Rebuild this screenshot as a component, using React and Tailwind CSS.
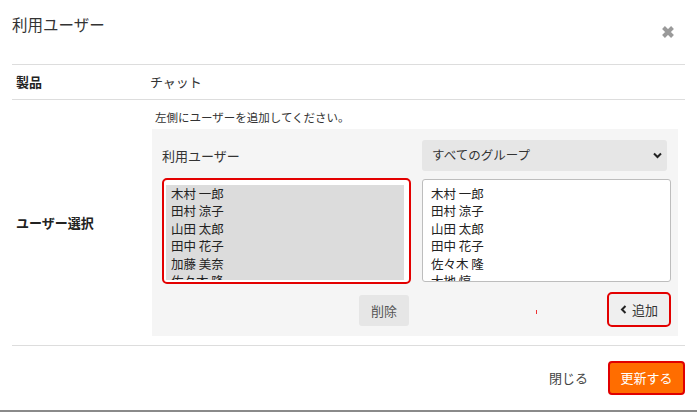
import { useState } from 'react';

const users = ['木村 一郎', '田村 涼子', '山田 太郎', '田中 花子', '加藤 美奈', '佐々木 隆'];
const members = ['木村 一郎', '田村 涼子', '山田 太郎', '田中 花子', '佐々木 隆', '大地 惇'];

export default function App() {
  const [group, setGroup] = useState('all');

  return (
    <div
      className="h-[412px] w-[697px] overflow-hidden bg-white text-[#333] border-b-2 border-[#8a8a8a]"
      style={{ fontFamily: '"Noto Sans CJK JP", "Noto Sans", sans-serif' }}
    >
      <div className="px-3">
        {/* header */}
        <div className="flex h-[65px] items-start justify-between border-b border-[#ddd]">
          <h1 className="pt-[13px] text-[15.5px] font-normal text-[#333]">利用ユーザー</h1>
          <button className="mt-[25px] mr-[10px] text-[#9a9a9a]">
            <svg width="14" height="14" viewBox="0 0 14 14">
              <path d="M2.5 2.5 L11.5 11.5 M11.5 2.5 L2.5 11.5" stroke="currentColor" strokeWidth="4" strokeLinecap="butt" />
            </svg>
          </button>
        </div>

        {/* product row */}
        <div className="flex h-[35px] items-center border-b border-[#ddd] text-[13px]">
          <div className="w-[138px] pl-1 font-bold text-[#222]">製品</div>
          <div className="text-[#333]">チャット</div>
        </div>

        {/* user select row */}
        <div className="flex h-[246px] border-b border-[#ddd]">
          <div className="flex w-[138px] items-center pl-1 text-[13px] font-bold text-[#222]">ユーザー選択</div>
          <div className="flex-1 pt-[10px]">
            <p className="pl-[5px] text-[11.5px] leading-[15px] text-[#333]">左側にユーザーを追加してください。</p>
            <div className="mt-[4px] ml-[2px] mr-[7px] bg-[#f5f5f5] pt-[11px] pb-[9px] pl-[10px] pr-[7px]">
              <div className="grid grid-cols-2 gap-x-[11px]">
                <div className="flex h-[31px] items-center text-[13px] text-[#333]">利用ユーザー</div>
                <div className="relative mr-[4px]">
                  <select
                    value={group}
                    onChange={(e) => setGroup(e.target.value)}
                    className="h-[31px] w-full appearance-none rounded-[3px] bg-[#e6e6e6] pl-[10px] text-[12.5px] text-[#333] outline-none"
                  >
                    <option value="all">すべてのグループ</option>
                  </select>
                  <svg className="pointer-events-none absolute right-[5px] top-[12px]" width="9" height="7" viewBox="0 0 9 7">
                    <path d="M1 1.5 L4.5 5 L8 1.5" fill="none" stroke="#222" strokeWidth="2" />
                  </svg>
                </div>

                <div className="mt-[7px] h-[106px] overflow-hidden rounded-[5px] border-2 border-[#e30000] bg-white pt-[5px] pb-[2px] pl-[2px] pr-[5px]">
                  <div className="h-full overflow-hidden bg-[#dcdcdc] pl-[5px] text-[12.5px] leading-[17.4px] text-[#222]">
                    {users.map((u) => (
                      <div key={u} className="whitespace-nowrap">{u}</div>
                    ))}
                  </div>
                </div>
                <div className="mt-[8px] h-[103px] overflow-hidden rounded-[3px] border border-[#bdbdbd] bg-white pt-[5px] pl-[8px] text-[12.5px] leading-[17.4px] text-[#222]">
                  {members.map((u) => (
                    <div key={u} className="whitespace-nowrap">{u}</div>
                  ))}
                </div>

                <div className="mt-[10px] flex justify-end pr-[2px]">
                  <button className="mt-[1px] h-[31px] w-[50px] rounded-[3px] bg-[#e6e6e6] text-[13px] text-[#555]">削除</button>
                </div>
                <div className="relative mt-[8px] flex justify-end">
                  <span className="absolute left-[114px] top-[18px] h-[4px] w-[1px] bg-[#e33]" />
                  <button className="flex h-[35px] w-[64px] items-center justify-center gap-[5px] rounded-[5px] border-2 border-[#e30000] bg-[#efefef] text-[13px] text-[#333]">
                    <svg width="7" height="9" viewBox="0 0 7 9">
                      <path d="M5.5 1 L2 4.5 L5.5 8" fill="none" stroke="#222" strokeWidth="2" />
                    </svg>
                    追加
                  </button>
                </div>
              </div>
            </div>
          </div>
        </div>

        {/* footer */}
        <div className="flex h-[62px] items-center justify-end gap-[20px] pt-[1px]">
          <button className="text-[13px] text-[#444]">閉じる</button>
          <button className="h-[34px] w-[77px] rounded-[4px] border-2 border-[#e00000] bg-[#ff6d00] text-[13px] text-white">更新する</button>
        </div>
      </div>
    </div>
  );
}
